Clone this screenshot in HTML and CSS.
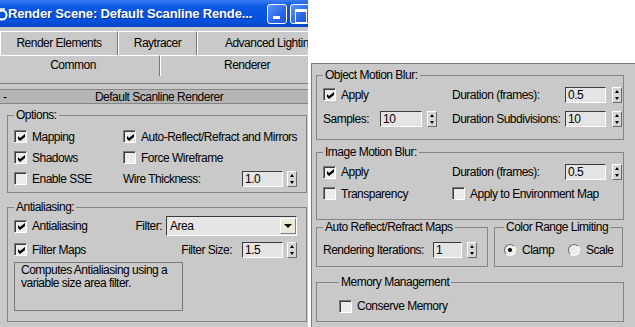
FILE: index.html
```html
<!DOCTYPE html>
<html lang="en">

<head>
  <meta charset="UTF-8">
  <title>Render Scene</title>
  <link rel="stylesheet" href="styles.css">
</head>

<body>
  <div class="window">
    <div class="titlebar">
      <svg class="app-icon" width="8" height="16" viewBox="0 0 8 16">
        <circle cx="2" cy="9" r="4.5" fill="none" stroke="#fff" stroke-width="2" />
        <path d="M-2 3h7" stroke="#fff" stroke-width="1.5" />
      </svg>
      <span class="title">Render Scene: Default Scanline Rende...</span>
      <span class="tb-btn tb-min"></span>
      <span class="tb-btn tb-max"></span>
    </div>

    <div class="tabs">
      <div class="tab-row tab-back">
        <div class="tab tab-elements">Render Elements</div>
        <div class="tab tab-ray">Raytracer</div>
        <div class="tab tab-adv">Advanced Lighting</div>
      </div>
      <div class="tab-row tab-front">
        <div class="tab tab-common">Common</div>
        <div class="tab tab-renderer">Renderer</div>
      </div>
    </div>

    <div class="panel">
      <div class="rollout-head">
        <span class="toggle">-</span>
        <span class="rollout-title">Default Scanline Renderer</span>
      </div>

      <fieldset class="group options">
        <legend>Options:</legend>
        <div class="row h21">
          <label class="check col1"><span class="cb on"><svg width="7" height="7" viewBox="0 0 7 7"><path d="M0 2l2 2 5-4v3l-5 4-2-2z" /></svg></span>Mapping</label>
          <label class="check"><span class="cb on"><svg width="7" height="7" viewBox="0 0 7 7"><path d="M0 2l2 2 5-4v3l-5 4-2-2z" /></svg></span>Auto-Reflect/Refract and Mirrors</label>
        </div>
        <div class="row h21">
          <label class="check col1"><span class="cb on"><svg width="7" height="7" viewBox="0 0 7 7"><path d="M0 2l2 2 5-4v3l-5 4-2-2z" /></svg></span>Shadows</label>
          <label class="check"><span class="cb"></span>Force Wireframe</label>
        </div>
        <div class="row h21">
          <label class="check col1"><span class="cb"></span>Enable SSE</label>
          <span>Wire Thickness:</span>
          <span class="field push"><span class="num w41">1.0</span><span class="spin"></span></span>
        </div>
      </fieldset>

      <fieldset class="group antialias">
        <legend>Antialiasing:</legend>
        <div class="row h24">
          <label class="check col1"><span class="cb on"><svg width="7" height="7" viewBox="0 0 7 7"><path d="M0 2l2 2 5-4v3l-5 4-2-2z" /></svg></span>Antialiasing</label>
          <span class="push filter-label">Filter:</span>
          <span class="select">Area<span class="select-btn"></span></span>
        </div>
        <div class="row h23">
          <label class="check col1"><span class="cb on"><svg width="7" height="7" viewBox="0 0 7 7"><path d="M0 2l2 2 5-4v3l-5 4-2-2z" /></svg></span>Filter Maps</label>
          <span class="push size-label">Filter Size:</span>
          <span class="field"><span class="num w41">1.5</span><span class="spin"></span></span>
        </div>
        <div class="desc">
          <div>Computes Antialiasing using a</div>
          <div>variable size area filter.</div>
        </div>
      </fieldset>
    </div>
  </div>

  <div class="side">
    <fieldset class="group wide obj-blur">
      <legend>Object Motion Blur:</legend>
      <div class="row h25">
        <label class="check blur-left"><span class="cb on"><svg width="7" height="7" viewBox="0 0 7 7"><path d="M0 2l2 2 5-4v3l-5 4-2-2z" /></svg></span>Apply</label>
        <span class="dur-label">Duration (frames):</span>
        <span class="field gap6"><span class="num w41">0.5</span><span class="spin"></span></span>
      </div>
      <div class="row h24">
        <span class="blur-left field-row">
          <span class="samples-label">Samples:</span>
          <span class="field gap5"><span class="num w42">10</span><span class="spin"></span></span>
        </span>
        <span class="dur-label">Duration Subdivisions:</span>
        <span class="field gap6"><span class="num w41">10</span><span class="spin"></span></span>
      </div>
    </fieldset>

    <fieldset class="group wide img-blur">
      <legend>Image Motion Blur:</legend>
      <div class="row h24">
        <label class="check blur-left"><span class="cb on"><svg width="7" height="7" viewBox="0 0 7 7"><path d="M0 2l2 2 5-4v3l-5 4-2-2z" /></svg></span>Apply</label>
        <span class="dur-label">Duration (frames):</span>
        <span class="field gap6"><span class="num w41">0.5</span><span class="spin"></span></span>
      </div>
      <div class="row h19">
        <label class="check blur-left"><span class="cb"></span>Transparency</label>
        <label class="check"><span class="cb"></span>Apply to Environment Map</label>
      </div>
    </fieldset>

    <div class="pair">
      <fieldset class="group reflect">
        <legend>Auto Reflect/Refract Maps</legend>
        <div class="row h24">
          <span class="iter-label">Rendering Iterations:</span>
          <span class="field gap5"><span class="num w29">1</span><span class="spin"></span></span>
        </div>
      </fieldset>
      <fieldset class="group color-range">
        <legend>Color Range Limiting</legend>
        <div class="row h24">
          <label class="radio-opt clamp"><span class="radio on"></span>Clamp</label>
          <label class="radio-opt"><span class="radio"></span>Scale</label>
        </div>
      </fieldset>
    </div>

    <fieldset class="group wide memory">
      <legend>Memory Management</legend>
      <div class="row h20">
        <label class="check"><span class="cb"></span>Conserve Memory</label>
      </div>
    </fieldset>
  </div>
</body>

</html>
```

FILE: styles.css
```css
* {
  box-sizing: border-box;
}

body {
  margin: 0;
  display: flex;
  align-items: flex-start;
  background-color: #fff;
  font-family: "Liberation Sans", Arial, sans-serif;
  font-size: 12px;
  letter-spacing: -0.5px;
  color: #000;
}

/* left window */
.window {
  width: 308px;
  height: 327px;
  flex-shrink: 0;
  overflow: hidden;
  background-color: #c9c9c9;
}

.titlebar {
  height: 27px;
  display: flex;
  align-items: center;
  white-space: nowrap;
  color: #fff;
  background: linear-gradient(#3a7cf2, #0c58e4 25%, #0552de 75%, #0847c4);
}

.app-icon {
  flex-shrink: 0;
}

.title {
  font-size: 13px;
  font-weight: bold;
  letter-spacing: -0.15px;
  text-shadow: 1px 1px #0a2f8c;
}

.tb-btn {
  flex-shrink: 0;
  width: 20px;
  height: 20px;
  border: 1px solid #fff;
  border-radius: 3px;
  background: linear-gradient(135deg, #5a95f6, #2a68e8 60%, #1c55d6);
  position: relative;
}

.tb-min {
  margin-left: auto;
}

.tb-min::after {
  content: "";
  position: absolute;
  left: 5px;
  bottom: 4px;
  width: 7px;
  height: 3px;
  background-color: #fff;
}

.tb-max {
  margin-left: 3px;
  margin-right: -2px;
}

.tb-max::after {
  content: "";
  position: absolute;
  left: 4px;
  top: 4px;
  width: 10px;
  height: 10px;
  border: 1px solid #fff;
  border-top-width: 3px;
}

.tabs {
  padding-top: 4px;
}

.tab-row {
  display: flex;
  white-space: nowrap;
}

.tab {
  flex-shrink: 0;
  text-align: center;
  border-top: 1px solid #fff;
  border-left: 1px solid #fff;
  border-right: 1px solid #7a7a7a;
}

.tab-back {
  height: 24px;
  line-height: 22px;
}

.tab-front {
  height: 21px;
  line-height: 18px;
  margin-left: -14px;
}

.tab-elements {
  width: 118px;
}

.tab-ray {
  width: 79px;
}

.tab-adv {
  width: 146px;
}

.tab-common {
  width: 174px;
}

.tab-renderer {
  width: 174px;
}

.panel {
  margin-top: 7px;
  padding-top: 5px;
  border-top: 1px solid #808080;
}

.rollout-head {
  height: 15px;
  display: flex;
  align-items: center;
  background-color: #b5b5b5;
  border-top: 1px solid #858585;
  border-bottom: 1px solid #858585;
}

.toggle {
  width: 10px;
  padding-left: 3px;
}

.rollout-title {
  flex: 1;
  text-align: center;
}

/* group boxes */
.group {
  margin: 0;
  padding: 0;
  min-width: 0;
  border: 1px solid #858585;
}

.group legend {
  padding: 0 2px;
  line-height: 14px;
}

.options {
  margin: 4px 1px 0 7px;
  padding: 4px 9px 3px 6px;
}

.antialias {
  margin: 7px 1px 0 7px;
  padding: 0 9px 10px 6px;
}

.row {
  display: flex;
  align-items: center;
  white-space: nowrap;
}

.h19 {
  height: 19px;
}

.h20 {
  height: 20px;
}

.h21 {
  height: 21px;
}

.h23 {
  height: 23px;
}

.h24 {
  height: 24px;
}

.h25 {
  height: 25px;
}

.push {
  margin-left: auto;
}

.col1 {
  width: 109px;
  flex-shrink: 0;
}

.check {
  display: flex;
  align-items: center;
  gap: 5px;
}

.cb {
  flex-shrink: 0;
  width: 13px;
  height: 13px;
  display: flex;
  align-items: center;
  justify-content: center;
  background-color: #ececec;
  border: 1px solid;
  border-color: #7a7a7a #fff #fff #7a7a7a;
  box-shadow: inset 1px 1px #3c3c3c;
}

.cb svg {
  margin: 1px 0 0 1px;
}

.radio-opt {
  display: flex;
  align-items: center;
  gap: 6px;
}

.clamp {
  width: 64px;
}

.radio {
  width: 12px;
  height: 12px;
  display: flex;
  align-items: center;
  justify-content: center;
  border-radius: 50%;
  background-color: #ececec;
  border: 1px solid;
  border-color: #6a6a6a #fff #fff #6a6a6a;
}

.radio.on::after {
  content: "";
  width: 4px;
  height: 4px;
  border-radius: 50%;
  background-color: #000;
}

.field {
  display: flex;
  align-items: center;
  gap: 4px;
}

.gap5 {
  gap: 5px;
}

.gap6 {
  gap: 6px;
}

.num {
  height: 16px;
  line-height: 14px;
  padding-left: 2px;
  background-color: #e4e4e4;
  border: 1px solid;
  border-color: #3c3c3c #fff #fff #3c3c3c;
}

.w29 {
  width: 29px;
}

.w41 {
  width: 41px;
}

.w42 {
  width: 42px;
}

.spin {
  width: 10px;
  height: 16px;
  display: flex;
  flex-direction: column;
  align-items: center;
  justify-content: space-around;
  background-color: #d6d6d6;
  border: 1px solid;
  border-color: #fff #6a6a6a #6a6a6a #fff;
}

.spin::before {
  content: "";
  border-left: 2px solid transparent;
  border-right: 2px solid transparent;
  border-bottom: 3px solid #000;
}

.spin::after {
  content: "";
  border-left: 2px solid transparent;
  border-right: 2px solid transparent;
  border-top: 3px solid #000;
}

.filter-label {
  margin-right: 4px;
}

.select {
  width: 131px;
  height: 20px;
  display: flex;
  align-items: center;
  padding-left: 3px;
  background-color: #e6e6e6;
  border: 1px solid;
  border-color: #3c3c3c #fff #fff #3c3c3c;
}

.select-btn {
  margin-left: auto;
  width: 16px;
  height: 16px;
  display: flex;
  align-items: center;
  justify-content: center;
  background-color: #ece9d8;
  border: 1px solid;
  border-color: #fff #808080 #808080 #fff;
}

.select-btn::after {
  content: "";
  border-left: 4px solid transparent;
  border-right: 4px solid transparent;
  border-top: 4px solid #000;
}

.size-label {
  margin-right: 10px;
}

.desc {
  width: 169px;
  height: 49px;
  margin-top: 1px;
  padding: 1px 6px;
  line-height: 13px;
  white-space: nowrap;
  overflow: hidden;
  border: 1px solid #7a7a7a;
}

/* right panel */
.side {
  flex: 1;
  height: 264px;
  margin: 63px 0 0 3px;
  padding: 4px 0 0 4px;
  background-color: #c9c9c9;
  border-top: 1px solid #7a7a7a;
  border-left: 1px solid #7a7a7a;
}

.wide {
  width: 308px;
}

.obj-blur {
  padding: 0 0 8px 6px;
}

.img-blur {
  margin-top: 5px;
  padding: 1px 0 16px 6px;
}

.blur-left {
  width: 129px;
  flex-shrink: 0;
}

.field-row {
  display: flex;
  align-items: center;
}

.samples-label {
  width: 57px;
}

.dur-label {
  width: 113px;
  flex-shrink: 0;
}

.pair {
  display: flex;
  gap: 6px;
}

.reflect {
  width: 172px;
  padding: 4px 0 4px 6px;
}

.iter-label {
  width: 110px;
}

.color-range {
  width: 129px;
  padding: 4px 0 4px 9px;
}

.memory {
  margin-top: 8px;
  padding: 7px 0 5px 22px;
}
```
